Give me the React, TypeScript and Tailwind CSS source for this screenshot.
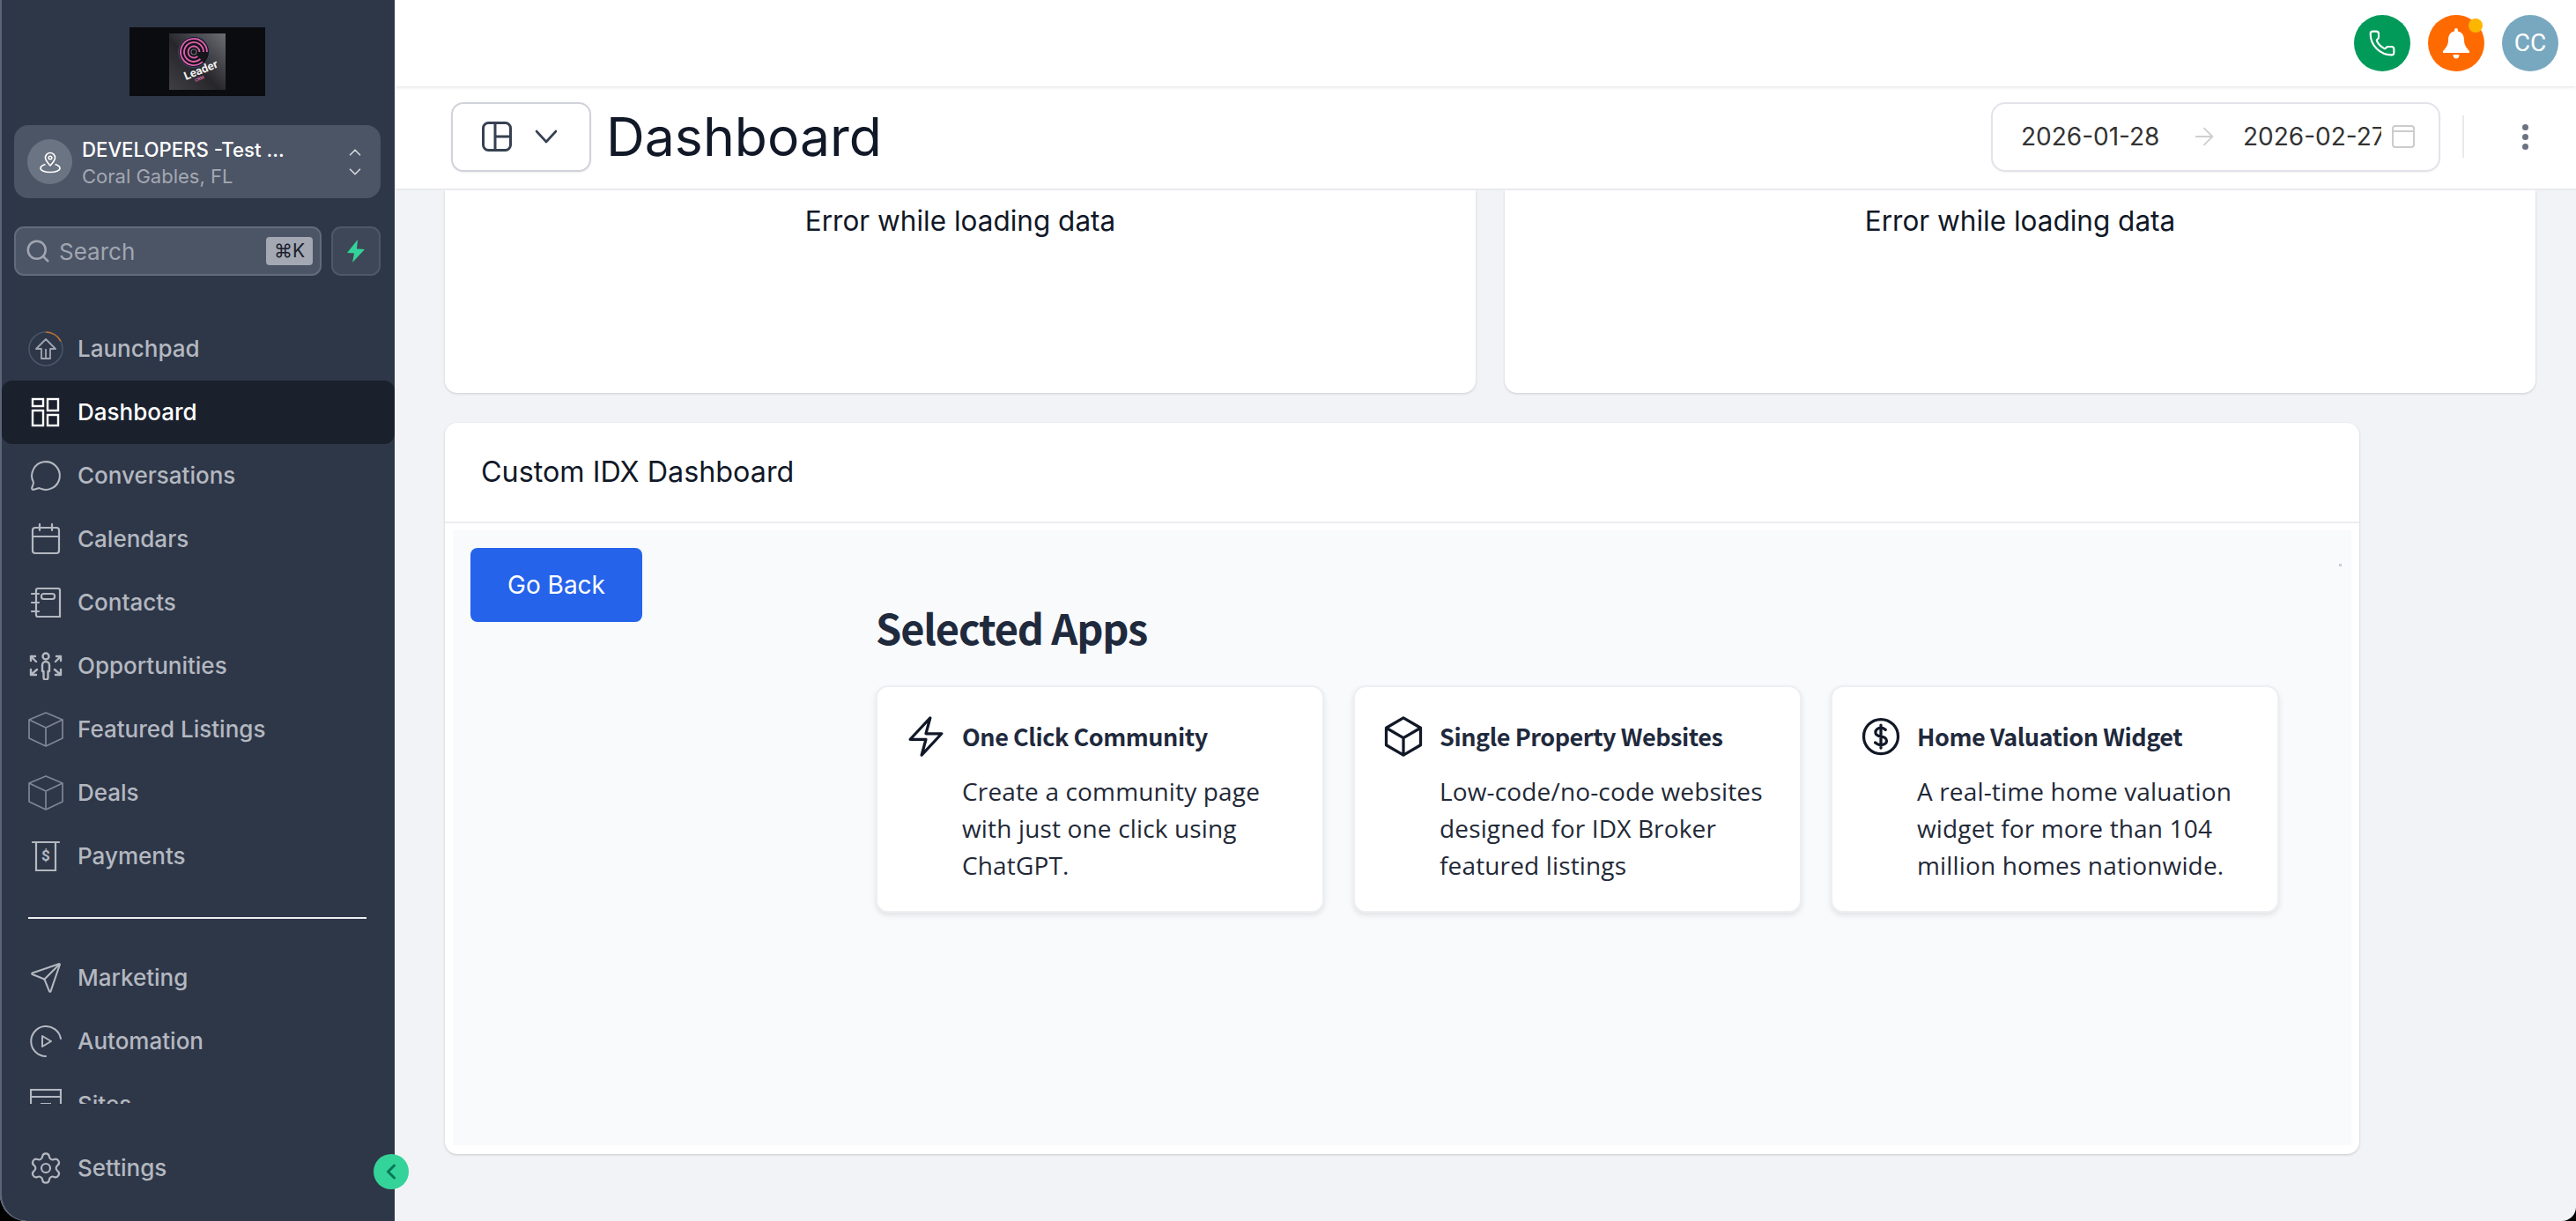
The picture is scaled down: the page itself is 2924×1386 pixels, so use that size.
import React from "react";
import { ChevronUp, ChevronDown, ChevronLeft, Search, MessageCircle, Send, Settings, Phone, ArrowRight } from "lucide-react";
import { HiOutlineBolt, HiOutlineCube, HiOutlineCurrencyDollar } from "react-icons/hi2";

function Launch() {
  return (
    <svg width="40" height="40" viewBox="0 0 40 40" fill="none">
      <circle cx="20" cy="20" r="19" stroke="#4a5568" strokeWidth="1.6" />
      <path d="M20 1a19 19 0 0 1 17 10.5" stroke="#c2712c" strokeWidth="1.6" />
      <path d="M20 9L9 20h6v11h10V20h6z M20 20v11" stroke="#a0a6b1" strokeWidth="1.800" strokeLinejoin="round" />
    </svg>
  );
}
function Grid() {
  return (
    <svg width="34" height="34" viewBox="0 0 34 34" fill="none" stroke="currentColor" strokeWidth="2.4">
      <rect x="2" y="2" width="12" height="8" /><rect x="19" y="2" width="12" height="13" />
      <rect x="2" y="15" width="12" height="17" /><rect x="19" y="20" width="12" height="12" />
    </svg>
  );
}
function Cal() {
  return (
    <svg width="34" height="36" viewBox="0 0 34 36" fill="none" stroke="currentColor" strokeWidth="2.2" strokeLinecap="round">
      <rect x="2" y="5" width="30" height="29" rx="3" /><path d="M2 15h30M10 1v7M24 1v7" />
    </svg>
  );
}
function Book() {
  return (
    <svg width="36" height="36" viewBox="0 0 36 36" fill="none" stroke="currentColor" strokeWidth="2.2" strokeLinecap="round">
      <path d="M7 4a2 2 0 0 1 2-2h23a2 2 0 0 1 2 2v30H9a2 2 0 0 1-2-2z" /><rect x="13" y="8" width="15" height="6" rx="2.5" /><path d="M2 8h8M2 18h8M2 28h8" />
    </svg>
  );
}
function Opp() {
  return (
    <svg width="38" height="32" viewBox="0 0 38 32" fill="none" stroke="currentColor" strokeWidth="2.4" strokeLinecap="round" strokeLinejoin="round">
      <circle cx="19" cy="5" r="3.5" /><path d="M15 15a4 4 0 0 1 8 0v7h-1.500v7a2.500 2.500 0 0 1-5 0v-7H15z" />
      <path d="M2 5h5M2 5v5M2 5l6 6M36 5h-5M36 5v5M36 5l-6 6M2 26h6M2 26v-6M2 26l7-6M36 26h-6M36 26v-6M36 26l-7-6" />
    </svg>
  );
}
function Box() {
  return (
    <svg width="40" height="40" viewBox="0 0 40 40" fill="none" stroke="#7f8694" strokeWidth="1.7" strokeLinejoin="round">
      <path d="M20 1l19 8v21l-19 9-19-9V9z" /><path d="M1 9l19 9 19-9M20 18v21" />
    </svg>
  );
}
function Pay() {
  return (
    <svg width="32" height="36" viewBox="0 0 32 36" fill="none" stroke="currentColor" strokeWidth="2.2" strokeLinecap="round">
      <path d="M1 2h30M5 2v32h22V2" />
      <text x="16" y="23" textAnchor="middle" fontSize="17" fontWeight="700" fill="currentColor" stroke="none" fontFamily="Roboto, sans-serif">$</text>
    </svg>
  );
}
function Auto() {
  return (
    <svg width="36" height="36" viewBox="0 0 36 36" fill="none" stroke="currentColor" strokeWidth="2" strokeLinecap="round" strokeLinejoin="round">
      <path d="M35 15A17 17 0 1 0 18 35" /><path d="M14 12l10 6-10 6z" />
    </svg>
  );
}
function Sites() {
  return (
    <svg width="36" height="36" viewBox="0 0 36 36" fill="none" stroke="currentColor" strokeWidth="2.2">
      <rect x="1" y="1" width="34" height="30" /><path d="M1 9h34M12 17h12" />
    </svg>
  );
}

function NavItem({ label, icon, active }: { label: string; icon: React.ReactNode; active?: boolean }) {
  return (
    <div className={active
      ? "h-[72px] ml-[2px] pl-[30px] rounded-[12px] bg-[#1a202c] text-white flex items-center gap-[16px] shrink-0"
      : "h-[72px] pl-[32px] text-[#b4b8c0] flex items-center gap-[16px] shrink-0"}>
      <span className="w-[40px] h-[40px] flex items-center justify-center shrink-0">{icon}</span>
      <span className="text-[26px] font-medium leading-none">{label}</span>
    </div>
  );
}

function Logo() {
  return (
    <div className="w-[154px] h-[78px] bg-[#0b0c10] flex items-center justify-center">
      <svg width="64" height="64" viewBox="0 0 64 64">
        <defs>
          <linearGradient id="lg" x1="1" y1="0" x2="0" y2="1">
            <stop offset="0" stopColor="#6d6e75" /><stop offset="0.55" stopColor="#26262b" /><stop offset="1" stopColor="#3f3f45" />
          </linearGradient>
        </defs>
        <rect width="64" height="64" fill="url(#lg)" />
        <circle cx="28" cy="21" r="17.500" fill="#15151a" stroke="#3d4a66" strokeWidth="1" />
        <path d="M43 21a15 15 0 1 0-5 11.200M39 21a11 11 0 1 0-3.500 8M34.500 21a6.500 6.500 0 1 0-2.200 4.900" fill="none" stroke="#e25fb1" strokeWidth="1.800" />
        <circle cx="28" cy="21" r="3" fill="none" stroke="#6a6a72" strokeWidth="1.200" />
        <text x="19" y="53" fontSize="13" fontWeight="700" fill="#f2f2f2" fontFamily="Roboto, sans-serif" transform="rotate(-22 19 53)">Leader</text>
        <text x="30" y="55" fontSize="5" fontWeight="700" fill="#d86aa8" fontFamily="Roboto, sans-serif" transform="rotate(-22 30 55)">CRM</text>
      </svg>
    </div>
  );
}

function Sidebar() {
  return (
    <aside className="relative z-20 w-[448px] h-full shrink-0 bg-[#2e3748] shadow-[inset_2px_0_0_#5b6577] flex flex-col font-['Inter',sans-serif] rounded-bl-[30px]">
      <div className="pt-[31px] flex justify-center"><Logo /></div>
      <div className="mt-[33px] mx-[16px] h-[83px] rounded-[16px] bg-[#4c5566] flex items-center pl-[15px] pr-[18px]">
        <div className="w-[51px] h-[51px] rounded-full bg-[#6b7482] flex items-center justify-center shrink-0">
          <svg width="26" height="26" viewBox="0 0 26 26" fill="none" stroke="white" strokeWidth="1.600" strokeLinejoin="round">
            <path d="M13 17c-3-3.400-5.500-5.800-5.500-9a5.500 5.500 0 0 1 11 0c0 3.200-2.500 5.600-5.500 9z" /><circle cx="13" cy="8" r="1.800" />
            <path d="M7.500 15.500C4 16.500 2 18 2 20c0 2.400 4.600 4.500 11 4.500S24 22.400 24 20c0-2-2-3.500-5.500-4.500" />
          </svg>
        </div>
        <div className="ml-[11px] pt-[2px] flex-1 flex flex-col">
          <span className="text-[22.2px] font-medium text-white leading-[30px] whitespace-nowrap">DEVELOPERS -Test ...</span>
          <span className="text-[22px] text-[#a3a8b2] leading-[30px]">Coral Gables, FL</span>
        </div>
        <div className="flex flex-col text-[#d6d8dd]">
          <ChevronUp size={22} strokeWidth={1.8} />
          <ChevronDown size={22} strokeWidth={1.8} />
        </div>
      </div>
      <div className="mt-[32px] mx-[16px] flex gap-[11px]">
        <div className="flex-1 h-[56px] rounded-[11px] bg-[#4c5566] border-2 border-[#626b7b] flex items-center pl-[10px] pr-[8px]">
          <Search size={30} strokeWidth={2} className="text-[#a0a6b1] shrink-0" />
          <span className="ml-[9px] flex-1 text-[26px] text-[#a0a6b1]">Search</span>
          <span className="w-[53px] h-[32px] rounded-[4px] bg-[#a3a8b2] text-[#1a202c] text-[21px] flex items-center justify-center">⌘K</span>
        </div>
        <div className="w-[56px] h-[56px] rounded-[11px] bg-[#3e4757] border-2 border-[#4f5868] flex items-center justify-center">
          <svg width="22" height="26" viewBox="0 0 22 26" fill="#34d399"><path d="M13 0L1 15l8 .5L7 26l14-15-9-.5z" /></svg>
        </div>
      </div>
      <nav className="mt-[47px] h-[893px] overflow-hidden flex flex-col shrink-0">
        <NavItem label="Launchpad" icon={<Launch />} />
        <NavItem label="Dashboard" icon={<Grid />} active />
        <NavItem label="Conversations" icon={<MessageCircle size={38} strokeWidth={1.3} />} />
        <NavItem label="Calendars" icon={<Cal />} />
        <NavItem label="Contacts" icon={<Book />} />
        <NavItem label="Opportunities" icon={<Opp />} />
        <NavItem label="Featured Listings" icon={<Box />} />
        <NavItem label="Deals" icon={<Box />} />
        <NavItem label="Payments" icon={<Pay />} />
        <div className="mt-[33px] mb-[31px] mx-[32px] h-[2px] bg-[#eceef1] shrink-0" />
        <NavItem label="Marketing" icon={<Send size={38} strokeWidth={1.3} />} />
        <NavItem label="Automation" icon={<Auto />} />
        <NavItem label="Sites" icon={<Sites />} />
      </nav>
      <div className="mt-[37px]"><NavItem label="Settings" icon={<Settings size={40} strokeWidth={1.3} />} /></div>
      <button className="absolute left-[424px] top-[1310px] w-[40px] h-[40px] rounded-full bg-[#34d399] flex items-center justify-center text-[#047857]">
        <ChevronLeft size={28} strokeWidth={2.6} />
      </button>
    </aside>
  );
}

function Topbar() {
  return (
    <header className="relative z-10 h-[98px] shrink-0 bg-white shadow-[0_1px_4px_rgba(0,0,0,0.12)] flex items-center justify-end gap-[20px] pr-[20px]">
      <div className="w-[64px] h-[64px] rounded-full bg-[#029a59] flex items-center justify-center text-white"><Phone size={32} strokeWidth={1.6} /></div>
      <div className="relative w-[64px] h-[64px] rounded-full bg-[#ff6a00] flex items-center justify-center">
        <svg width="32" height="36" viewBox="0 0 32 36" fill="white">
          <path d="M14 3a2 2 0 0 1 4 0v1.500c5 1 7 5 7 10 0 5 2 8 6 12.500v2H1v-2c4-4.500 6-7.500 6-12.500 0-5 2-9 7-10z" />
          <path d="M12.500 31h7c0 3-1.500 4.500-3.500 4.500s-3.500-1.500-3.500-4.500z" />
        </svg>
        <span className="absolute right-[2px] top-[4px] w-[16px] h-[16px] rounded-full bg-[#fdb600]" />
      </div>
      <div className="w-[64px] h-[64px] rounded-full bg-[#78a8c0] flex items-center justify-center text-white text-[28px] font-['Roboto',sans-serif]">CC</div>
    </header>
  );
}

function SubHeader() {
  return (
    <div className="h-[118px] shrink-0 bg-white border-b-2 border-[#e9eaef] flex items-center pl-[64px] pr-[54px] pb-[2px]">
      <div className="w-[159px] h-[79px] rounded-[14px] border-2 border-[#d1d3da] shadow-[0_1px_2px_rgba(0,0,0,0.08)] flex items-center pl-[33px] gap-[26px] text-[#374151]">
        <svg width="34" height="34" viewBox="0 0 34 34" fill="none" stroke="currentColor" strokeWidth="3">
          <rect x="1.500" y="1.500" width="31" height="31" rx="6" /><path d="M15 2v30M15 17h18" />
        </svg>
        <svg width="26" height="16" viewBox="0 0 26 16" fill="none" stroke="currentColor" strokeWidth="2.600" strokeLinecap="round" strokeLinejoin="round"><path d="M2 2l11 12L24 2" /></svg>
      </div>
      <h1 className="ml-[17px] text-[60.7px] leading-none font-normal text-[#111827]">Dashboard</h1>
      <div className="ml-auto w-[510px] h-[79px] rounded-[16px] border-2 border-[#e2e3ea] shadow-[0_1px_2px_rgba(0,0,0,0.05)] flex items-center pl-[32px] text-[28px] text-[#333333]">
        <span className="w-[158px] shrink-0 whitespace-nowrap">2026-01-28</span>
        <ArrowRight size={32} strokeWidth={1.4} className="ml-[34px] text-[#cfcfcf] shrink-0" />
        <span className="ml-[28px] w-[157px] shrink-0 overflow-hidden whitespace-nowrap">2026-02-27</span>
        <svg className="ml-[12px] shrink-0" width="26" height="26" viewBox="0 0 26 26" fill="none" stroke="#cccccc" strokeWidth="2">
          <rect x="1" y="1" width="24" height="24" rx="3" /><path d="M1 7h24" />
        </svg>
      </div>
      <div className="ml-[25px] w-[2px] h-[48px] bg-[#e8e9ed]" />
      <div className="ml-[66px] flex flex-col gap-[4px]">
        <span className="w-[7px] h-[7px] rounded-full bg-[#6b7280]" />
        <span className="w-[7px] h-[7px] rounded-full bg-[#6b7280]" />
        <span className="w-[7px] h-[7px] rounded-full bg-[#6b7280]" />
      </div>
    </div>
  );
}

function ErrorCard() {
  return (
    <div className="w-[1170px] h-[230px] bg-white rounded-b-[14px] shadow-[0_1px_3px_rgba(0,0,0,0.16)] flex justify-center pt-[15px] text-[31.5px] leading-[40px] text-[#111827]">
      Error while loading data
    </div>
  );
}

function AppCard({ title, icon, lines }: { title: string; icon: React.ReactNode; lines: string[] }) {
  return (
    <div className="w-[509px] h-[258px] bg-white rounded-[14px] border-2 border-[#eeeff3] shadow-[0_3px_6px_rgba(0,0,0,0.1)] pl-[32px] pt-[33px] flex gap-[18px]">
      <span className="w-[46px] h-[46px] shrink-0 flex items-center justify-center text-[#111827] [&>svg]:shrink-0">{icon}</span>
      <div>
        <div className="font-['Noto_Sans_CJK_SC',sans-serif] font-bold text-[27px] tracking-[-0.45px] leading-[46px] text-[#1f2a3d]">{title}</div>
        <div className="mt-[18px] font-['Open_Sans',sans-serif] text-[28px] tracking-[0.15px] leading-[42px] text-[#1f2937]">
          {lines.map((l) => <div key={l} className="whitespace-nowrap">{l}</div>)}
        </div>
      </div>
    </div>
  );
}

function IdxCard() {
  return (
    <section className="mt-[34px] w-[2173px] h-[830px] bg-white rounded-[14px] shadow-[0_1px_3px_rgba(0,0,0,0.18)] flex flex-col">
      <div className="h-[114px] shrink-0 border-b-2 border-[#ebecf0] flex items-center pl-[41px] text-[32.3px] text-[#111827]">Custom IDX Dashboard</div>
      <div className="relative mt-[8px] mx-[9px] h-[698px] bg-[#f9fafc] flex">
        <div className="pl-[20px] pt-[20px] w-[480px] shrink-0">
          <button className="w-[195px] h-[84px] rounded-[8px] bg-[#2563eb] text-white text-[28px]">Go Back</button>
        </div>
        <div className="pt-[77px]">
          <h2 className="font-['Noto_Sans_CJK_SC',sans-serif] font-bold text-[47px] tracking-[-1.2px] leading-[66px] text-[#1f2a3d]">Selected Apps</h2>
          <div className="mt-[33px] flex gap-[33px]">
            <AppCard title="One Click Community" icon={<HiOutlineBolt size={52} />} lines={["Create a community page", "with just one click using", "ChatGPT."]} />
            <AppCard title="Single Property Websites" icon={<HiOutlineCube size={52} />} lines={["Low-code/no-code websites", "designed for IDX Broker", "featured listings"]} />
            <AppCard title="Home Valuation Widget" icon={<HiOutlineCurrencyDollar size={52} />} lines={["A real-time home valuation", "widget for more than 104", "million homes nationwide."]} />
          </div>
        </div>
        <span className="absolute left-[2141px] top-[38px] w-[3px] h-[3px] bg-[#c9cbd1]" />
      </div>
    </section>
  );
}

export default function App() {
  return (
    <div className="w-[2924px] h-[1386px] bg-black overflow-hidden">
      <div className="w-full h-full flex bg-[#f2f3f7] rounded-bl-[30px] rounded-br-[16px] overflow-hidden">
        <Sidebar />
        <main className="flex-1 flex flex-col font-['Inter',sans-serif] min-w-0">
          <Topbar />
          <SubHeader />
          <div className="flex-1 overflow-hidden pl-[57px]">
            <div className="flex gap-[33px]"><ErrorCard /><ErrorCard /></div>
            <IdxCard />
          </div>
        </main>
      </div>
    </div>
  );
}
